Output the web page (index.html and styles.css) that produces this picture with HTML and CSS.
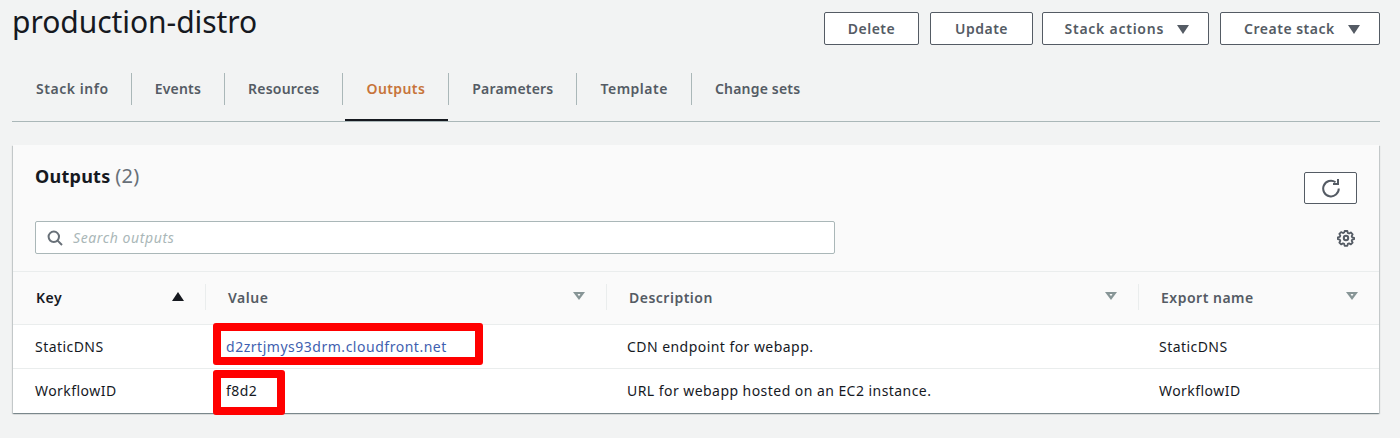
FILE: index.html
```html
<!DOCTYPE html>
<html lang="en">
<head>
    <meta charset="UTF-8">
    <meta name="viewport" content="width=device-width, initial-scale=1.0">
    <title>production-distro</title>
    <link rel="stylesheet" href="styles.css">
</head>
<body>
<!-- Stack header -->
<header class="page-head">
    <h1>production-distro</h1>
    <div class="actions">
        <button class="btn btn-delete">Delete</button>
        <button class="btn btn-update">Update</button>
        <button class="btn btn-menu btn-stack">Stack actions <span class="caret"></span></button>
        <button class="btn btn-menu btn-create">Create stack <span class="caret"></span></button>
    </div>
</header>

<!-- Tabs -->
<nav class="tabs">
    <a class="tab first">Stack info</a>
    <a class="tab">Events</a>
    <a class="tab">Resources</a>
    <a class="tab active">Outputs</a>
    <a class="tab">Parameters</a>
    <a class="tab wide">Template</a>
    <a class="tab last">Change sets</a>
</nav>

<!-- Outputs card -->
<section class="card">
    <div class="card-head">
        <div class="title-row">
            <h2>Outputs <span class="count">(2)</span></h2>
            <button class="btn-refresh" aria-label="Refresh">
                <svg width="20" height="20" viewBox="0 0 20 20" fill="none" stroke="#545b64" stroke-width="2">
                    <path d="M14.5 4.2A7.800 7.800 0 1 0 17.800 10.500"/>
                    <path d="M17 1v5h-5"/>
                </svg>
            </button>
        </div>
        <div class="search-row">
            <div class="search">
                <svg width="16" height="16" viewBox="0 0 16 16" fill="none" stroke="#687078" stroke-width="2">
                    <circle cx="6.800" cy="6.800" r="5.200"/>
                    <path d="M10.600 10.600l4.400 4.400"/>
                </svg>
                <span class="placeholder">Search outputs</span>
            </div>
            <svg class="gear" width="18" height="18" viewBox="0 0 18 18" fill="none" stroke="#545b64" stroke-width="2">
                <circle cx="9" cy="9" r="2.200"/>
                <path stroke-linejoin="round" d="M7.500 1.200h3l.5 2.200 1.400.6 2-1.100 2 2-1.100 2 .6 1.400 2.200.5v1.400l-2.200.5-.6 1.400 1.100 2-2 2-2-1.100-1.400.6-.5 2.200h-3l-.5-2.200-1.400-.6-2 1.100-2-2 1.100-2-.6-1.400-2.200-.5V8.300l2.200-.5.6-1.400-1.100-2 2-2 2 1.100 1.400-.6z" transform="translate(.9 .9) scale(.9)"/>
            </svg>
        </div>
    </div>
    <table>
        <thead>
            <tr>
                <th class="col-key sorted"><div class="th"><span>Key</span><span class="sort-up"></span></div></th>
                <th class="col-value"><div class="th"><span>Value</span><svg class="sort" width="12" height="8" viewBox="0 0 12 8"><path d="M0 0h12L6 8z" fill="#879596"/><path d="M4.500 2h3L6 4.300z" fill="#fafafa"/></svg></div></th>
                <th class="col-desc"><div class="th"><span>Description</span><svg class="sort" width="12" height="8" viewBox="0 0 12 8"><path d="M0 0h12L6 8z" fill="#879596"/><path d="M4.500 2h3L6 4.300z" fill="#fafafa"/></svg></div></th>
                <th class="col-export"><div class="th"><span>Export name</span><svg class="sort" width="12" height="8" viewBox="0 0 12 8"><path d="M0 0h12L6 8z" fill="#879596"/><path d="M4.500 2h3L6 4.300z" fill="#fafafa"/></svg></div></th>
            </tr>
        </thead>
        <tbody>
            <tr>
                <td class="key">StaticDNS</td>
                <td class="marked"><a class="link">d2zrtjmys93drm.cloudfront.net</a><span class="red-box box-link"></span></td>
                <td>CDN endpoint for webapp.</td>
                <td>StaticDNS</td>
            </tr>
            <tr>
                <td class="key">WorkflowID</td>
                <td class="marked">f8d2<span class="red-box box-id"></span></td>
                <td>URL for webapp hosted on an EC2 instance.</td>
                <td>WorkflowID</td>
            </tr>
        </tbody>
    </table>
</section>
</body>
</html>
```

FILE: styles.css
```css
body {
    font-family: "Noto Sans", Arial, sans-serif;
    font-size: 14px;
    color: #16191f;
    background-color: #f2f3f3;
    margin: 0;
    padding: 0 21px 0 12px;
    height: 438px;
    overflow: hidden;
    box-sizing: border-box;
}
.page-head {
    display: flex;
    justify-content: space-between;
    height: 73px;
}
h1 {
    margin: 0;
    font-size: 30px;
    font-weight: 400;
    line-height: 44px;
    letter-spacing: -.05px;
}
.actions {
    display: flex;
    gap: 11px;
    padding-top: 12px;
    margin-right: -1px;
}
.btn {
    height: 33px;
    box-sizing: border-box;
    background-color: #fff;
    border: 1px solid #545b64;
    border-radius: 2px;
    color: #545b64;
    font-family: inherit;
    font-size: 14px;
    font-weight: 600;
    letter-spacing: .5px;
    padding: 0;
}
.btn-delete { width: 95px; }
.btn-update { width: 103px; margin-right: -2px; }
.btn-stack { width: 167px; letter-spacing: .75px; padding-left: 3px; }
.btn-create { width: 160px; padding-left: 4px; }
.caret {
    display: inline-block;
    width: 0;
    height: 0;
    margin-left: 9px;
    border-left: 6px solid transparent;
    border-right: 6px solid transparent;
    border-top: 9px solid #545b64;
}
.tabs {
    display: flex;
    height: 48px;
    padding-left: 1px;
    border-bottom: 1px solid #aab7b8;
    margin-right: -1px;
    align-items: flex-start;
}
.tab {
    height: 32px;
    line-height: 32px;
    padding: 0 23px;
    font-weight: 600;
    letter-spacing: .2px;
    color: #545b64;
    border-right: 1px solid #aab7b8;
    position: relative;
}
.tab.first {
    letter-spacing: .55px;
    padding-right: 22px;
}
.tab.wide {
    letter-spacing: .5px;
}
.tab.last {
    border-right: none;
}
.tab.active {
    color: #c7743a;
    letter-spacing: .4px;
}
.tab.active::after {
    content: "";
    position: absolute;
    left: 2px;
    right: 0;
    top: 46px;
    height: 2px;
    background-color: #16191f;
}
.card {
    margin: 23px 0 0 1px;
    background-color: #fff;
    box-shadow: 0 1px 1px 0 rgba(0,28,36,.3), 1px 1px 1px 0 rgba(0,28,36,.15), -1px 1px 1px 0 rgba(0,28,36,.15);
    height: 268px;
}
.card-head {
    background-color: #fafafa;
    height: 126px;
    padding: 0 22px;
    border-bottom: 1px solid #eaeded;
}
.title-row {
    display: flex;
    justify-content: space-between;
    height: 76px;
}
h2 {
    margin: 0;
    padding-top: 17px;
    font-size: 18px;
    line-height: 28px;
    font-weight: 700;
    letter-spacing: .25px;
}
.count {
    font-size: 20px;
    font-weight: 400;
    color: #687078;
}
.btn-refresh {
    margin-top: 27px;
    width: 53px;
    height: 32px;
    background-color: #fff;
    border: 1px solid #545b64;
    border-radius: 2px;
    padding: 0;
    display: flex;
    align-items: center;
    justify-content: center;
}
.search-row {
    display: flex;
    justify-content: space-between;
    align-items: center;
}
.search {
    display: flex;
    align-items: center;
    gap: 10px;
    width: 800px;
    height: 33px;
    box-sizing: border-box;
    padding-left: 11px;
    background-color: #fff;
    border: 1px solid #aab7b8;
    border-radius: 2px;
}
.placeholder {
    font-style: italic;
    color: #aab7b8;
    letter-spacing: .6px;
}
.gear {
    margin-right: 2px;
}
table {
    width: 100%;
    border-collapse: collapse;
    table-layout: fixed;
}
th {
    height: 52px;
    padding: 0 0 1px;
    box-sizing: border-box;
    background-color: #fafafa;
    border-bottom: 1px solid #eaeded;
    text-align: left;
    font-weight: 600;
    letter-spacing: .5px;
    color: #545b64;
}
.col-key { width: 192px; }
.col-value { width: 401px; }
.col-desc { width: 532px; }
.sorted { color: #16191f; }
.th {
    display: flex;
    align-items: center;
    justify-content: space-between;
    height: 26px;
    padding: 0 21px 0 22px;
    border-left: 1px solid #eaeded;
}
.sorted .th {
    border-left: none;
    padding-left: 23px;
}
.sort {
    margin-bottom: 3px;
}
.sort-up {
    width: 0;
    height: 0;
    border-left: 6px solid transparent;
    border-right: 6px solid transparent;
    border-bottom: 9px solid #16191f;
    margin-bottom: 2px;
}
td {
    height: 43px;
    padding: 0 0 0 21px;
    border-bottom: 1px solid #eaeded;
    letter-spacing: .45px;
}
td.key {
    padding-left: 22px;
}
tbody tr:last-child td {
    border-bottom: none;
}
.marked {
    position: relative;
}
.link {
    color: #3f5fb0;
    letter-spacing: .52px;
}
/* red highlight drawn over the screenshot */
.red-box {
    position: absolute;
    box-sizing: border-box;
    left: 8px;
    border: 8px solid #f00;
    border-radius: 3px;
}
.box-link {
    top: -2px;
    width: 270px;
    height: 42px;
}
.box-id {
    top: 1px;
    width: 72px;
    height: 45px;
}
```
